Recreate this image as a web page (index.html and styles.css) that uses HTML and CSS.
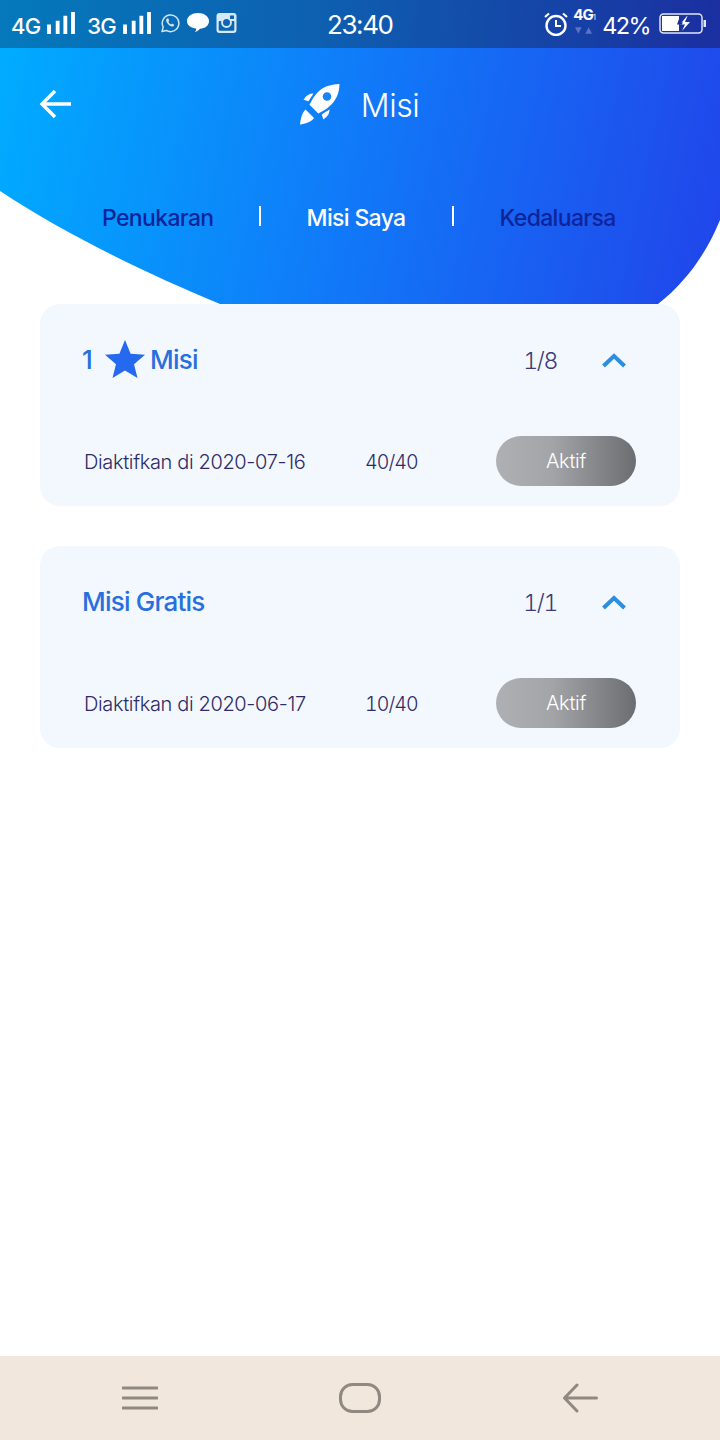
FILE: index.html
```html
<!DOCTYPE html>
<html lang="id">
<head>
<meta charset="utf-8">
<title>Misi</title>
<link rel="stylesheet" href="styles.css">
</head>
<body>
<div class="phone">
  <div class="status">
    <div class="status-side">
      <span class="net">4G</span>
      <svg class="bars" viewBox="0 0 30 24"><path d="M1 13h4v10H1zM10 9h4v14h-4zM18 4h4v19h-4zM26 0h4v23h-4z" transform="translate(-1 0)"/></svg>
      <span class="net net-2">3G</span>
      <svg class="bars" viewBox="0 0 30 24"><path d="M1 13h4v10H1zM10 9h4v14h-4zM18 4h4v19h-4zM26 0h4v23h-4z" transform="translate(-1 0)"/></svg>
      <svg class="app app-wa" viewBox="0 0 20 20"><path d="M2 18.500l1.200-4.400A8.300 8.300 0 1 1 6.300 17.400z" fill="none" stroke="#cfe6f5" stroke-width="1.500" stroke-linejoin="round"/><path d="M7 5.500c-1.200.8-1.200 2.500 0 4.200 1.300 2 3.500 3.800 5.300 3.800 1 0 1.900-.8 1.900-1.800l-2.200-1.200-1 .9c-1-.4-2-1.400-2.600-2.700l.8-1-1-2.400z" fill="#cfe6f5"/></svg>
      <svg class="app app-msg" viewBox="0 0 22 20"><path d="M11 0c6 0 11 3.400 11 8s-4 7.500-9 7.700c-1.300 1.400-3 2.600-5 3.300.8-1.100 1.200-2.300 1.200-3.500C4 15 0 12.400 0 8c0-4.600 5-8 11-8z" fill="#fff"/></svg>
      <svg class="app app-ig" viewBox="0 0 20 20"><rect x="0" y="0" width="20" height="20" rx="3" fill="#d5e8f5"/><rect x="2.200" y="8" width="15.600" height="9.800" rx="1" fill="#0e64b0"/><circle cx="10" cy="9.500" r="5.400" fill="#d5e8f5"/><circle cx="10" cy="9.500" r="3.500" fill="#0e64b0"/><rect x="13.500" y="2.500" width="4" height="3.500" fill="#0e64b0"/></svg>
    </div>
    <div class="clock">23:40</div>
    <div class="status-side status-right">
      <svg class="alarm" viewBox="0 0 24 24"><circle cx="12" cy="13.500" r="9.500" fill="none" stroke="#fff" stroke-width="2.400"/><path d="M12 8v6h5" fill="none" stroke="#fff" stroke-width="2"/><path d="M1 5l4-3.500M23 5l-4-3.500" stroke="#fff" stroke-width="2.200"/></svg>
      <div class="signal">
        <span class="signal-label">4G<small>1</small></span>
        <svg class="signal-arrows" viewBox="0 0 18 8"><path d="M0 0h7L3.500 7zM11 7h7l-3.500-7z"/></svg>
      </div>
      <span class="battery-pct">42%</span>
      <svg class="battery" viewBox="0 0 48 22"><rect x="1" y="1" width="42" height="19" rx="3.500" fill="none" stroke="#dfe6f7" stroke-width="1.500"/><path d="M3 3h17v15H3z" fill="#fff"/><path d="M44.500 7h2.500v7h-2.500z" fill="#dfe6f7"/><path d="M28 3l-7 8.500h5l-3 6.500 8-9h-5l2.500-6z" fill="#fff"/><path d="M20 6l-2 5.500h4l-2 4 4-6h-3z" fill="#14309c"/></svg>
    </div>
  </div>

  <header class="hero">
    <div class="hero-bar">
      <svg class="back" viewBox="0 0 34 32"><path d="M32 16H3M16 3L3 16l13 13" fill="none" stroke="#fff" stroke-width="3.400"/></svg>
      <div class="hero-title">
        <svg class="rocket" viewBox="0 0 42 42"><path d="M40.500 1c-9.500.3-17 3-22.500 9-3 3.300-5.500 7.700-7.500 11.700l8.800 8.800c4.300-2 8.700-4.500 11.700-7.700 6.300-5.600 9.300-12.700 9.500-21.800z" fill="#fff"/><circle cx="28" cy="13.500" r="4.300" fill="#1585f5"/><path d="M14.500 10.500c-4 0-7 1.800-10 6.200l5 1.500c2-3 3.500-5.300 5-7.700zM30.500 26.500c0 4-1.800 7-6.200 10l-1.500-5c3-2 5.300-3.500 7.700-5z" fill="#fff"/><path d="M6.500 26.500l8.500 8.500C12 39 6 41 1 41.500 1.500 36 3 30 6.500 26.500z" fill="#fff"/></svg>
        <h1 class="title">Misi</h1>
      </div>
    </div>
    <nav class="tabs">
      <span class="tab tab-1">Penukaran</span>
      <i class="tab-sep sep-1"></i>
      <span class="tab tab-2 tab-active">Misi Saya</span>
      <i class="tab-sep sep-2"></i>
      <span class="tab tab-3">Kedaluarsa</span>
    </nav>
  </header>

  <main class="list">
    <section class="card">
      <div class="card-head">
        <div class="card-name">
          <span>1</span>
          <svg class="star" viewBox="0 0 40 38"><path d="M20 0l5.600 13.700L40 14.800 29 24.300 32.500 38 20 30.500 7.500 38 11 24.300 0 14.800l14.400-1.100z"/></svg>
          <span>Misi</span>
        </div>
        <span class="count">1/8</span>
        <svg class="chevron" viewBox="0 0 24 15"><path d="M1.500 13L12 3l10.500 10" fill="none" stroke="#2a8fe0" stroke-width="4"/></svg>
      </div>
      <div class="card-row">
        <span class="activated">Diaktifkan di 2020-07-16</span>
        <span class="progress">40/40</span>
        <span class="pill">Aktif</span>
      </div>
    </section>
    <section class="card">
      <div class="card-head">
        <div class="card-name"><span>Misi Gratis</span></div>
        <span class="count">1/1</span>
        <svg class="chevron" viewBox="0 0 24 15"><path d="M1.500 13L12 3l10.500 10" fill="none" stroke="#2a8fe0" stroke-width="4"/></svg>
      </div>
      <div class="card-row">
        <span class="activated">Diaktifkan di 2020-06-17</span>
        <span class="progress">10/40</span>
        <span class="pill">Aktif</span>
      </div>
    </section>
  </main>

  <footer class="sysnav">
    <svg class="sys-menu" viewBox="0 0 36 24"><path d="M1 2h34M1 12h34M1 22h34" fill="none" stroke="#8f8982" stroke-width="3" stroke-linecap="round"/></svg>
    <svg class="sys-home" viewBox="0 0 42 30"><rect x="1.500" y="1.500" width="39" height="27" rx="12" fill="none" stroke="#8f8982" stroke-width="3"/></svg>
    <svg class="sys-back" viewBox="0 0 36 30"><path d="M34.500 15H2.500M15 2L2.500 15 15 28" fill="none" stroke="#8f8982" stroke-width="3" stroke-linecap="round" stroke-linejoin="round"/></svg>
  </footer>
</div>
</body>
</html>
```
FILE: styles.css
```css
* { box-sizing: border-box; }
html, body { margin: 0; padding: 0; background: #fff; }
body { font-family: Inter, "Liberation Sans", sans-serif; }
.phone { width: 720px; height: 1440px; display: flex; flex-direction: column; overflow: hidden; }

.status {
  height: 48px; flex: none; display: flex; align-items: center; justify-content: space-between;
  padding: 0 12px 0 11px; position: relative; color: #fff;
  background: linear-gradient(95deg, #0479bb 0%, #0e5fb0 45%, #1b2fa0 100%);
}
.status-side { display: flex; align-items: center; }
.net { font-size: 22px; font-weight: 500; letter-spacing: -0.8px; line-height: 1; margin-top: 4px; }
.net-2 { margin-left: 11px; }
.bars { width: 29px; height: 23px; fill: #fff; margin-left: 7px; margin-top: -1px; }
.app { flex: none; }
.app-wa { width: 20px; height: 20px; margin-left: 8px; margin-top: -2px; }
.app-msg { width: 22px; height: 20px; margin-left: 7px; margin-top: -3px; }
.app-ig { width: 21px; height: 20px; margin-left: 7px; margin-top: -3px; }
.clock { position: absolute; left: 327px; top: 10px; font-size: 26px; line-height: 30px; font-weight: 400; letter-spacing: -1.400px; }
.status-right { margin-right: 1px; }
.alarm { width: 24px; height: 24px; margin-top: -1px; }
.signal { width: 24px; margin-left: 5px; display: flex; flex-direction: column; align-items: flex-start; margin-top: -6px; }
.signal-label { font-size: 15px; font-weight: 700; line-height: 15px; letter-spacing: -0.8px; white-space: nowrap; }
.signal-label small { font-size: 7px; font-weight: 400; }
.signal-arrows { width: 17px; height: 8px; fill: #5a72c8; margin-left: 2px; margin-top: 2px; }
.battery-pct { font-size: 23.5px; font-weight: 400; margin-left: 5px; line-height: 1; margin-top: 3px; letter-spacing: -1.600px; }
.battery { width: 48px; height: 22px; margin-left: 9px; margin-top: -1px; }

.hero {
  height: 256px; flex: none; display: flex; flex-direction: column;
  background: linear-gradient(102deg, #00acff 0%, #1178f8 50%, #2144ea 100%);
  clip-path: path("M0 0H720V172C706 206 686 234 658 256H220C150 227 68 188 0 143Z");
}
.hero-bar { height: 112px; flex: none; position: relative; display: flex; align-items: center; justify-content: center; }
.back { position: absolute; left: 39px; top: 40px; width: 34px; height: 32px; }
.hero-title { display: flex; align-items: center; gap: 20px; margin-right: 2px; }
.rocket { width: 42px; height: 42px; }
.title { margin: 4px 0 0; font-size: 32px; font-weight: 300; color: #fff; line-height: 40px; letter-spacing: -0.5px; }
.tabs { display: flex; align-items: center; padding: 30px 0 0 102px; height: 56px; flex: none; box-sizing: content-box; }
.tab { font-size: 23px; font-weight: 500; color: #10249a; line-height: 28px; white-space: nowrap; letter-spacing: -0.65px; }
.tab-active { color: #fff; }
.tab-sep { width: 2px; height: 20px; background: #fff; display: block; margin-top: -4px; }
.sep-1 { margin-left: 45px; margin-right: 46px; }
.sep-2 { margin-left: 46px; margin-right: 46px; }

.list { padding: 0 40px; display: flex; flex-direction: column; gap: 40px; flex: 1; }
.card { height: 202px; background: #f3f7fe; border-radius: 20px; padding: 0 44px; display: flex; flex-direction: column; }
.card-head { height: 112px; display: flex; align-items: center; flex: none; margin-left: -2px; }
.card-name { display: flex; align-items: center; color: #2770dd; font-size: 26px; font-weight: 500; flex: 1; letter-spacing: -0.8px; margin-top: -2px; }
.star { width: 40px; height: 38px; fill: #2469ee; margin: 0 5px 0 13px; }
.count { font-size: 23px; font-weight: 300; color: #3c3a78; margin: 2px 45px 0 0; letter-spacing: -1.3px; font-variant-numeric: tabular-nums; }
.chevron { width: 24px; height: 15px; margin-right: 10px; }
.card-row { display: flex; align-items: center; height: 50px; margin-top: 20px; }
.activated { font-size: 20px; font-weight: 300; color: #2d2a66; width: 281px; white-space: nowrap; letter-spacing: -0.35px; margin-top: 2px; }
.progress { font-size: 19.5px; font-weight: 300; color: #2d2a66; width: 131px; white-space: nowrap; letter-spacing: -0.9px; font-variant-numeric: tabular-nums; margin-top: 2px; }
.pill {
  width: 140px; height: 50px; border-radius: 25px; color: #fff; font-size: 20px; font-weight: 300;
  display: flex; align-items: center; justify-content: center; letter-spacing: -0.3px;
  background: linear-gradient(90deg, #aeb0b4 0%, #a2a4a8 40%, #6c6d70 100%);
}

.sysnav { height: 84px; flex: none; background: #f1e7dc; display: flex; align-items: center; justify-content: center; gap: 181px; }
.sys-menu { width: 36px; height: 24px; }
.sys-home { width: 42px; height: 30px; }
.sys-back { width: 36px; height: 30px; }
```
